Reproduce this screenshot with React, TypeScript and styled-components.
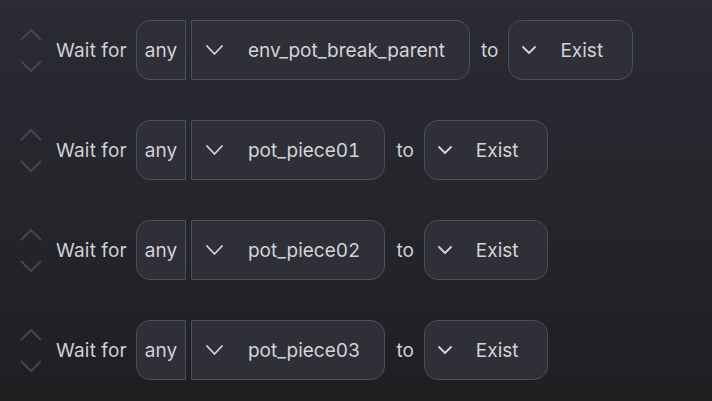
import React from "react";
import styled, { createGlobalStyle } from "styled-components";

const Global = createGlobalStyle`
  html, body { margin: 0; padding: 0; }
  body {
    width: 712px;
    height: 401px;
    overflow: hidden;
    background: linear-gradient(180deg, #2a2b33 0%, #25262c 50%, #1f1f22 100%);
    font-family: Inter, "Noto Sans", sans-serif;
    font-variant-numeric: tabular-nums;
  }
`;

const List = styled.div`
  display: flex;
  flex-direction: column;
  gap: 40px;
  padding: 20px 0 0 0;
`;

const Row = styled.div`
  display: flex;
  align-items: center;
  height: 60px;
`;

const Mover = styled.div`
  width: 22px;
  margin-left: 20px;
  display: flex;
  flex-direction: column;
  gap: 19px;
  align-items: center;
  color: #46474e;
`;

const Label = styled.span`
  margin-left: 14px;
  margin-right: 9px;
  font-size: 19px;
  letter-spacing: 0.2px;
  color: #cfd0d6;
  white-space: nowrap;
`;

const Connector = styled.span`
  margin: 0 10px 0 11px;
  font-size: 19px;
  color: #cfd0d6;
`;

const Box = styled.div<{ $left?: boolean; $right?: boolean }>`
  box-sizing: border-box;
  height: 60px;
  display: flex;
  align-items: center;
  background: #2e2f37;
  border: 1px solid #4a5060;
  border-radius: ${(p) =>
    `${p.$left ? 14 : 0}px ${p.$right ? 14 : 0}px ${p.$right ? 14 : 0}px ${p.$left ? 14 : 0}px`};
  color: #d2d3d9;
  font-size: 19px;
  white-space: nowrap;
`;

const Quantifier = styled(Box)`
  width: 50px;
  justify-content: center;
  margin-right: 5px;
`;

const Select = styled(Box)<{ $small?: boolean }>`
  padding: 0 ${(p) => (p.$small ? 29 : 24)}px 0 ${(p) => (p.$small ? 13 : 14)}px;
  gap: ${(p) => (p.$small ? 24 : 25)}px;
`;

const Chevron = ({ w, h }: { w: number; h: number }) => (
  <svg width={w} height={h} viewBox={`0 0 ${w} ${h}`} fill="none">
    <path
      d={`M1 1 L${w / 2} ${h - 1} L${w - 1} 1`}
      stroke="currentColor"
      strokeWidth="1.8"
      strokeLinecap="round"
      strokeLinejoin="round"
    />
  </svg>
);

const UpChevron = () => (
  <svg width="22" height="12" viewBox="0 0 22 12" fill="none">
    <path d="M1 11 L11 1 L21 11" stroke="currentColor" strokeWidth="2" />
  </svg>
);

const DownChevron = () => (
  <svg width="22" height="12" viewBox="0 0 22 12" fill="none">
    <path d="M1 1 L11 11 L21 1" stroke="currentColor" strokeWidth="2" />
  </svg>
);

const rows = ["env_pot_break_parent", "pot_piece01", "pot_piece02", "pot_piece03"];

export default function App() {
  return (
    <>
      <Global />
      <List>
        {rows.map((name) => (
          <Row key={name}>
            <Mover>
              <UpChevron />
              <DownChevron />
            </Mover>
            <Label>Wait for</Label>
            <Quantifier $left>any</Quantifier>
            <Select $right>
              <Chevron w={17} h={10} />
              <span>{name}</span>
            </Select>
            <Connector>to</Connector>
            <Select $left $right $small>
              <Chevron w={14} h={8} />
              <span>Exist</span>
            </Select>
          </Row>
        ))}
      </List>
    </>
  );
}
